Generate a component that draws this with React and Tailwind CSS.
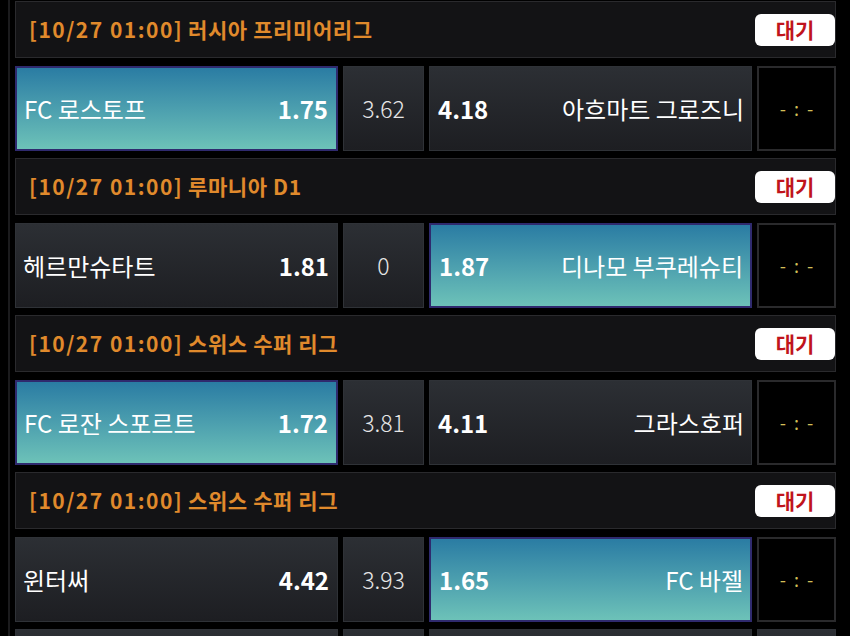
import React from 'react';

const matches = [
  { time: '[10/27 01:00]', league: '러시아 프리미어리그', home: 'FC 로스토프', homeOdd: '1.75', draw: '3.62', awayOdd: '4.18', away: '아흐마트 그로즈니', pick: 'home' },
  { time: '[10/27 01:00]', league: '루마니아 D1', home: '헤르만슈타트', homeOdd: '1.81', draw: '0', awayOdd: '1.87', away: '디나모 부쿠레슈티', pick: 'away' },
  { time: '[10/27 01:00]', league: '스위스 수퍼 리그', home: 'FC 로잔 스포르트', homeOdd: '1.72', draw: '3.81', awayOdd: '4.11', away: '그라스호퍼', pick: 'home' },
  { time: '[10/27 01:00]', league: '스위스 수퍼 리그', home: '윈터써', homeOdd: '4.42', draw: '3.93', awayOdd: '1.65', away: 'FC 바젤', pick: 'away' },
];

const plain = 'border border-[#2f3237] bg-gradient-to-b from-[#2c2f34] to-[#1d1e22]';
const picked = 'border-2 border-[#2f2a6e] bg-gradient-to-b from-[#2a7ca3] to-[#6dc2b8]';

function Header({ m }) {
  return (
    <div className="h-[57px] mb-[8px] flex items-center justify-between bg-[#131315] border border-[#2a2a2d] pl-[13px]">
      <span className="text-[21px] font-semibold text-[#e08a2c]">
        <span className="tracking-[1.5px]">{m.time}</span>{' '}
        <span className="tracking-[0.6px]">{m.league}</span>
      </span>
      <span className="w-[80px] h-[32px] rounded-[6px] bg-white flex items-center justify-center text-[21px] font-bold text-[#c0141c]">
        대기
      </span>
    </div>
  );
}

function Row({ m }) {
  return (
    <div className="h-[85px] mb-[7px] grid grid-cols-[323px_81px_323px_79px] gap-[5px] text-white">
      <div className={`flex items-center justify-between pl-[7px] pr-[8px] ${m.pick === 'home' ? picked : plain}`}>
        <span className="text-[24px] font-normal">{m.home}</span>
        <span className="text-[24px] font-bold">{m.homeOdd}</span>
      </div>
      <div className={`flex items-center justify-center ${plain}`}>
        <span className="text-[23px] font-light text-[#e6e6e6]">{m.draw}</span>
      </div>
      <div className={`flex items-center justify-between pl-[8px] pr-[7px] ${m.pick === 'away' ? picked : plain}`}>
        <span className="text-[24px] font-bold">{m.awayOdd}</span>
        <span className="text-[24px] font-normal">{m.away}</span>
      </div>
      <div className="flex items-center justify-center gap-[8px] bg-black border-2 border-[#2a2a2c] text-[#d2bf58] text-[18px]">
        <span>-</span>
        <span>:</span>
        <span>-</span>
      </div>
    </div>
  );
}

export default function App() {
  return (
    <div
      className="w-[850px] h-[636px] overflow-hidden bg-black flex"
      style={{ fontFamily: '"Noto Sans CJK KR", "Noto Sans", sans-serif' }}
    >
      <div className="ml-[8px] w-[2px] bg-[#1b1b1d]" />
      <div className="ml-[5px] w-[821px] pt-[1px]">
        {matches.map((m, i) => (
          <div key={i}>
            <Header m={m} />
            <Row m={m} />
          </div>
        ))}
        <div className="h-[85px] grid grid-cols-[323px_81px_323px_79px] gap-[5px]">
          <div className={plain} />
          <div className={plain} />
          <div className={plain} />
          <div className={plain} />
        </div>
      </div>
    </div>
  );
}
